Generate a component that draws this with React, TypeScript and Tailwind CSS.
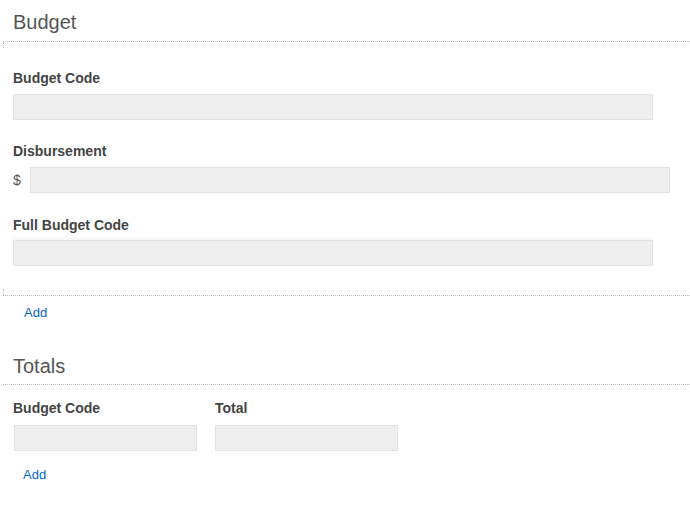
export default function App() {
  return (
    <div className="min-h-screen w-[690px] bg-white font-['Liberation_Sans',Arial,sans-serif] text-[#333]">
      {/* Budget header */}
      <h2 className="h-[41px] pl-[13px] pt-[10px] text-[20px] leading-[24px] font-normal text-[#555]">Budget</h2>

      {/* Budget block */}
      <div className="ml-[3px] border-t border-b border-dotted border-[#bbb]">
        <div className="h-[6px] w-0 border-l border-dotted border-[#bbb]" />
        <div className="pl-[10px] pt-[22px]">
          <label className="block text-[14px] font-bold leading-[16px] text-[#444]">Budget Code</label>
          <div className="mt-[8px] h-[26px] w-[640px] border border-[#e2e2e2] bg-[#eee]" />

          <label className="mt-[23px] block text-[14px] font-bold leading-[16px] text-[#444]">Disbursement</label>
          <div className="mt-[8px] flex items-center">
            <span className="w-[17px] text-[14px] text-[#555]">$</span>
            <div className="h-[26px] w-[640px] border border-[#e2e2e2] bg-[#eee]" />
          </div>

          <label className="mt-[24px] block text-[14px] font-bold leading-[16px] text-[#444]">Full Budget Code</label>
          <div className="mt-[7px] h-[26px] w-[640px] border border-[#e2e2e2] bg-[#eee] shadow-[0_-2px_3px_rgba(0,0,0,0.04)]" />
        </div>
        <div className="mt-[23px] h-[6px] w-0 border-l border-dotted border-[#bbb]" />
      </div>

      <div className="pl-[24px] pt-[4px]">
        <a className="text-[13px] leading-[16px] text-[#0066cc]" href="#">Add</a>
      </div>

      {/* Totals */}
      <h2 className="mt-[30px] pl-[13px] text-[20px] leading-[24px] font-normal text-[#555]">Totals</h2>
      <div className="ml-[3px] mt-[6px] border-t border-dotted border-[#bbb]" />

      <div className="flex gap-[18px] pl-[13px] pt-[15px]">
        <div className="w-[184px]">
          <label className="block text-[14px] font-bold leading-[16px] text-[#444]">Budget Code</label>
          <div className="ml-[1px] mt-[9px] h-[26px] w-[183px] border border-[#e2e2e2] bg-[#eee]" />
        </div>
        <div className="w-[184px]">
          <label className="block text-[14px] font-bold leading-[16px] text-[#444]">Total</label>
          <div className="mt-[9px] h-[26px] w-[183px] border border-[#e2e2e2] bg-[#eee]" />
        </div>
      </div>

      <div className="pl-[23px] pt-[11px]">
        <a className="text-[13px] leading-[16px] text-[#0066cc]" href="#">Add</a>
      </div>
    </div>
  );
}
